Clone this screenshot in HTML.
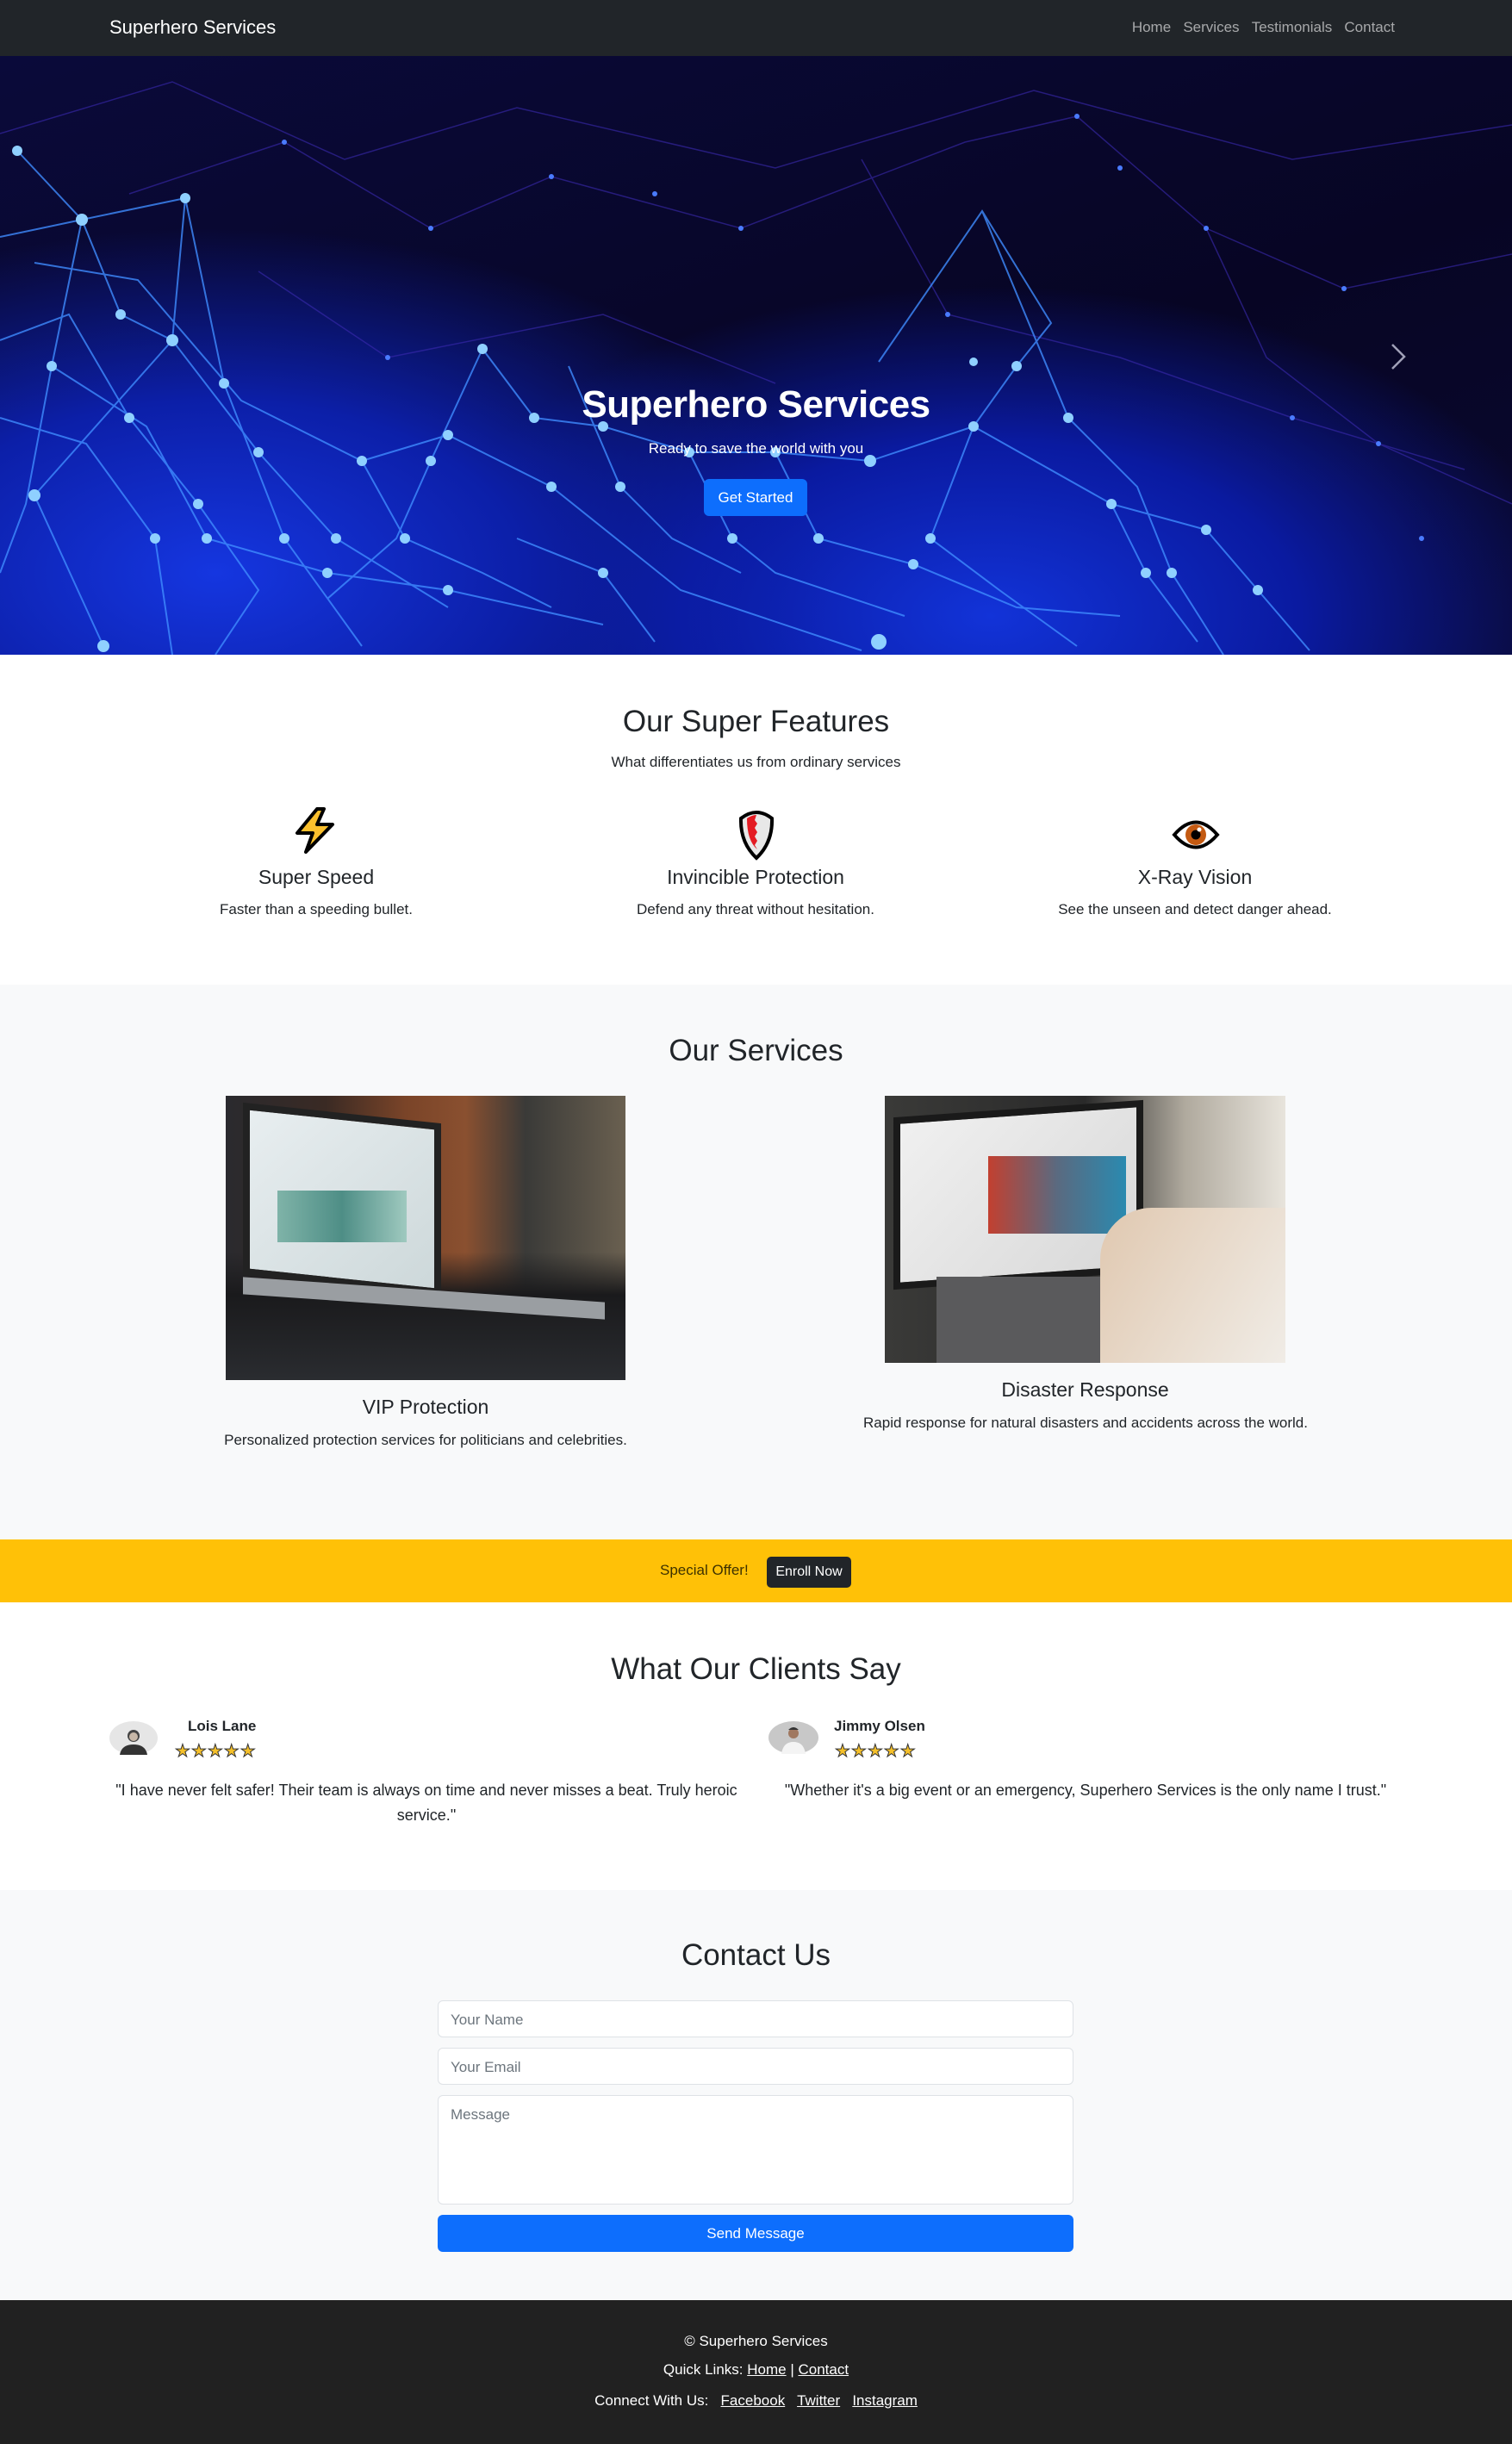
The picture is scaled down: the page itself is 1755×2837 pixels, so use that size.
<!DOCTYPE html>
<html><head><meta charset="utf-8">
<style>
*{margin:0;padding:0;box-sizing:border-box}
body{width:1755px;height:2837px;position:relative;font-family:"Liberation Sans",sans-serif;color:#212529;background:#fff;overflow:hidden}
.a{position:absolute}
.c{position:absolute;left:0;width:1755px;text-align:center}
nav{position:absolute;left:0;top:0;width:1755px;height:65px;background:#212529}
.hero{position:absolute;left:0;top:65px;width:1755px;height:695px;overflow:hidden;
background:radial-gradient(ellipse 900px 500px at 250px 600px,#1536e0 0%,#0c1fa8 40%,rgba(10,16,90,0) 80%),radial-gradient(ellipse 800px 450px at 1150px 650px,#1233d8 0%,#0a1aa0 45%,rgba(8,10,60,0) 85%),linear-gradient(160deg,#0a0a3a 0%,#070524 60%,#0a0930 100%)}
h2{font-weight:500}
.inp{position:absolute;left:508px;width:738px;background:#fff;border:1px solid #dee2e6;border-radius:6px;font-size:17px;color:#6c757d;padding:12px 14px}
footer{position:absolute;left:0;top:2670px;width:1755px;height:167px;background:#212121;color:#fff}
footer u{text-decoration:underline}
</style></head><body>
<nav>
<div class="a" style="left:127px;top:19px;color:#fff;font-size:22px">Superhero Services</div>
<div class="a" style="right:136px;top:22px;color:rgba(255,255,255,.6);font-size:17px">Home&nbsp;&nbsp;&nbsp;Services&nbsp;&nbsp;&nbsp;Testimonials&nbsp;&nbsp;&nbsp;Contact</div>
</nav>
<div class="hero">
<svg width="1755" height="695" style="position:absolute;left:0;top:0">
<g stroke="#3a2ab0" stroke-width="1.5" fill="none" opacity=".6">
<polyline points="150,160 330,100 500,200 640,140 860,200 1120,100 1250,70 1400,200 1560,270 1755,230"/>
<polyline points="0,90 200,30 400,120 600,60 900,130 1200,40 1500,120 1755,80"/>
<polyline points="1400,200 1470,350 1600,450 1755,520"/>
<polyline points="1000,120 1100,300 1300,350 1500,420 1700,480"/>
<polyline points="300,250 450,350 700,300 900,380"/>
</g>
<g stroke="#3f8cff" stroke-width="2" fill="none" opacity=".8">
<polyline points="20,110 95,190 215,165 200,330 40,510 120,685"/>
<polyline points="0,210 95,190 140,300 200,330 300,460 390,560 520,640"/>
<polyline points="40,240 160,260 280,400 420,470 520,440 640,500 790,620 1000,690"/>
<polyline points="95,190 60,360 30,520 0,600"/>
<polyline points="215,165 260,380 330,560 420,685"/>
<polyline points="0,330 80,300 150,420 230,520 300,620 250,695"/>
<polyline points="0,420 100,450 180,560 200,695"/>
<polyline points="60,360 170,430 240,560 380,600 520,620 700,660"/>
<polyline points="560,340 620,420 700,430 800,460 900,460 1010,470 1130,430 1180,360 1220,310 1140,180 1020,355"/>
<polyline points="1130,430 1080,560 1160,620 1250,685"/>
<polyline points="1130,430 1290,520 1400,550 1460,620 1520,690"/>
<polyline points="560,340 500,470 460,560 380,630"/>
<polyline points="800,460 850,560 900,600 1050,650"/>
<polyline points="1290,520 1330,600 1390,680"/>
<polyline points="660,360 720,500 780,560 860,600"/>
<polyline points="1140,180 1240,420 1320,500 1360,600 1420,695"/>
<polyline points="900,460 950,560 1060,590 1180,640 1300,650"/>
<polyline points="600,560 700,600 760,680"/>
<polyline points="420,470 470,560 560,600 640,640"/>
</g>
<g fill="#8fd0ff">
<circle cx="20" cy="110" r="6"/><circle cx="95" cy="190" r="7"/><circle cx="215" cy="165" r="6"/><circle cx="200" cy="330" r="7"/><circle cx="40" cy="510" r="7"/><circle cx="120" cy="685" r="7"/><circle cx="140" cy="300" r="6"/><circle cx="300" cy="460" r="6"/><circle cx="390" cy="560" r="6"/><circle cx="420" cy="470" r="6"/><circle cx="520" cy="440" r="6"/><circle cx="640" cy="500" r="6"/><circle cx="60" cy="360" r="6"/><circle cx="260" cy="380" r="6"/><circle cx="330" cy="560" r="6"/><circle cx="560" cy="340" r="6"/><circle cx="620" cy="420" r="6"/><circle cx="700" cy="430" r="6"/><circle cx="800" cy="460" r="6"/><circle cx="900" cy="460" r="6"/><circle cx="1010" cy="470" r="7"/><circle cx="1130" cy="430" r="6"/><circle cx="1180" cy="360" r="6"/><circle cx="1130" cy="355" r="5"/><circle cx="1080" cy="560" r="6"/><circle cx="1290" cy="520" r="6"/><circle cx="1400" cy="550" r="6"/><circle cx="1460" cy="620" r="6"/><circle cx="500" cy="470" r="6"/><circle cx="850" cy="560" r="6"/><circle cx="1020" cy="680" r="9"/><circle cx="720" cy="500" r="6"/><circle cx="1330" cy="600" r="6"/><circle cx="150" cy="420" r="6"/><circle cx="230" cy="520" r="6"/><circle cx="180" cy="560" r="6"/><circle cx="240" cy="560" r="6"/><circle cx="380" cy="600" r="6"/><circle cx="520" cy="620" r="6"/><circle cx="950" cy="560" r="6"/><circle cx="1060" cy="590" r="6"/><circle cx="1240" cy="420" r="6"/><circle cx="1360" cy="600" r="6"/><circle cx="470" cy="560" r="6"/><circle cx="700" cy="600" r="6"/>
</g>
<g fill="#4a7bff"><circle cx="330" cy="100" r="3"/><circle cx="640" cy="140" r="3"/><circle cx="860" cy="200" r="3"/><circle cx="1250" cy="70" r="3"/><circle cx="1400" cy="200" r="3"/><circle cx="1560" cy="270" r="3"/><circle cx="500" cy="200" r="3"/><circle cx="1300" cy="130" r="3"/><circle cx="760" cy="160" r="3"/><circle cx="1600" cy="450" r="3"/><circle cx="1650" cy="560" r="3"/><circle cx="1100" cy="300" r="3"/><circle cx="1500" cy="420" r="3"/><circle cx="450" cy="350" r="3"/></g>
</svg>
<svg class="a" style="left:1612px;top:333px" width="24" height="34"><polyline points="4,2 18,16 4,30" stroke="#a0a0b8" stroke-width="2.5" fill="none"/></svg>
<div class="c" style="top:380px;color:#fff;font-size:44px;font-weight:700;letter-spacing:-.5px">Superhero Services</div>
<div class="c" style="top:446px;color:#fff;font-size:17px">Ready to save the world with you</div>
<div class="a" style="left:817px;top:491px;width:120px;height:43px;background:#0d6efd;border-radius:6px;color:#fff;font-size:17px;text-align:center;line-height:43px">Get Started</div>
</div>

<h2 class="c" style="top:818px;font-size:35px">Our Super Features</h2>
<div class="c" style="top:875px;font-size:17px">What differentiates us from ordinary services</div>
<svg class="a" style="left:336px;top:935px" width="60" height="58" viewBox="0 0 60 58"><path d="M32,4 L9,32 L27,32 L19,54 L50,22 L32,22 L40,4 Z" fill="#fbc02d" stroke="#000" stroke-width="4" stroke-linejoin="round"/></svg>
<svg class="a" style="left:855px;top:938px" width="46" height="62" viewBox="0 0 46 62"><path d="M5,12 Q23,-2 41,12 Q42,40 23,58 Q4,40 5,12 Z" fill="#e8e8e8" stroke="#000" stroke-width="4"/><path d="M12,12 Q18,8 23,8 L21,14 L24,18 L21,23 L24,28 L21,33 L24,38 L21,43 L24,48 Q12,38 12,12 Z" fill="#e41b23"/></svg>
<svg class="a" style="left:1360px;top:946px" width="56" height="46" viewBox="0 0 56 46"><path d="M3,23 Q28,-6 53,23 Q28,52 3,23 Z" fill="#fff" stroke="#000" stroke-width="4"/><circle cx="28" cy="23" r="12" fill="#c45a12"/><circle cx="28" cy="23" r="5.5" fill="#000"/><circle cx="32" cy="17" r="2.5" fill="#fff"/></svg>
<div class="a" style="left:167px;width:400px;top:1005px;text-align:center;font-size:23px;font-weight:500">Super Speed</div>
<div class="a" style="left:167px;width:400px;top:1046px;text-align:center;font-size:17px">Faster than a speeding bullet.</div>
<div class="a" style="left:677px;width:400px;top:1005px;text-align:center;font-size:23px;font-weight:500">Invincible Protection</div>
<div class="a" style="left:677px;width:400px;top:1046px;text-align:center;font-size:17px">Defend any threat without hesitation.</div>
<div class="a" style="left:1187px;width:400px;top:1005px;text-align:center;font-size:23px;font-weight:500">X-Ray Vision</div>
<div class="a" style="left:1187px;width:400px;top:1046px;text-align:center;font-size:17px">See the unseen and detect danger ahead.</div>

<div class="a" style="left:0;top:1143px;width:1755px;height:644px;background:#f8f9fa"></div>
<h2 class="c" style="top:1200px;font-size:35px">Our Services</h2>
<div class="a" style="left:262px;top:1272px;width:464px;height:330px;overflow:hidden;background:linear-gradient(90deg,#2a2a2e 0%,#3a2a24 25%,#7a4428 45%,#8a5030 60%,#3a3a38 75%,#6a6050 100%)">
<div class="a" style="left:0;top:0;width:464px;height:330px;background:linear-gradient(180deg,rgba(0,0,0,0) 55%,#1a1a1c 70%,#2a2c30 100%)"></div>
<div class="a" style="left:20px;top:20px;width:230px;height:200px;background:linear-gradient(135deg,#e8eef0,#cdd8da);transform:skewY(6deg);border:8px solid #222"></div>
<div class="a" style="left:60px;top:110px;width:150px;height:60px;background:linear-gradient(90deg,#7fb3a8,#4e8e86,#9fc9bf)"></div>
<div class="a" style="left:20px;top:225px;width:420px;height:20px;background:#9a9ea2;transform:skewY(4deg)"></div>
</div>
<div class="a" style="left:1027px;top:1272px;width:465px;height:310px;overflow:hidden;background:linear-gradient(90deg,#3a3a38 0%,#2a2a2a 50%,#b0aa9e 75%,#e8e4dc 100%)">
<div class="a" style="left:10px;top:15px;width:290px;height:200px;background:linear-gradient(135deg,#f0f0f0,#d8d8d8);border:8px solid #1a1a1a;transform:skewY(-4deg)"></div>
<div class="a" style="left:120px;top:70px;width:160px;height:90px;background:linear-gradient(90deg,#c24030,#5a6a80,#2a8ab0)"></div>
<div class="a" style="left:60px;top:210px;width:260px;height:100px;background:#5a5a5c"></div>
<div class="a" style="left:250px;top:130px;width:215px;height:180px;background:linear-gradient(120deg,#e0c8b0,#f0ece6);border-radius:60px 0 0 0"></div>
</div>
<div class="a" style="left:262px;width:464px;top:1620px;text-align:center;font-size:23px;font-weight:500">VIP Protection</div>
<div class="a" style="left:182px;width:624px;top:1662px;text-align:center;font-size:17px">Personalized protection services for politicians and celebrities.</div>
<div class="a" style="left:1027px;width:465px;top:1600px;text-align:center;font-size:23px;font-weight:500">Disaster Response</div>
<div class="a" style="left:910px;width:700px;top:1642px;text-align:center;font-size:17px">Rapid response for natural disasters and accidents across the world.</div>

<div class="a" style="left:0;top:1787px;width:1755px;height:73px;background:#ffc107"></div>
<div class="a" style="left:766px;top:1813px;font-size:17px;color:#3d3100">Special Offer!</div>
<div class="a" style="left:890px;top:1807px;width:98px;height:36px;background:#212529;border-radius:5px;color:#fff;font-size:16px;text-align:center;line-height:36px">Enroll Now</div>

<h2 class="c" style="top:1918px;font-size:35px">What Our Clients Say</h2>
<svg class="a" style="left:127px;top:1998px" width="56" height="39" viewBox="0 0 56 39"><ellipse cx="28" cy="19.5" rx="28" ry="19.5" fill="#e6e6e6"/><circle cx="28" cy="17" r="7" fill="#444"/><circle cx="28" cy="18" r="5" fill="#c8b8a8"/><path d="M12,39 Q14,27 28,27 Q42,27 44,39 Z" fill="#333"/></svg>
<div class="a" style="left:218px;top:1994px;font-size:17px;font-weight:700">Lois Lane</div>
<div class="a" style="left:203px;top:2020px;font-size:20px;color:#f5c02a;letter-spacing:1px;-webkit-text-stroke:1px #333">★★★★★</div>
<svg class="a" style="left:892px;top:1998px" width="58" height="38" viewBox="0 0 58 38"><ellipse cx="29" cy="19" rx="29" ry="19" fill="#c8c8c8"/><circle cx="29" cy="14" r="6" fill="#a07860"/><path d="M23,10 Q29,4 35,10" fill="#333"/><path d="M15,38 Q17,24 29,24 Q41,24 43,38 Z" fill="#f4f4f4"/></svg>
<div class="a" style="left:968px;top:1994px;font-size:17px;font-weight:700">Jimmy Olsen</div>
<div class="a" style="left:969px;top:2020px;font-size:20px;color:#f5c02a;letter-spacing:1px;-webkit-text-stroke:1px #333">★★★★★</div>
<div class="a" style="left:130px;width:730px;top:2064px;text-align:center;font-size:18px;line-height:29px">"I have never felt safer! Their team is always on time and never misses a beat. Truly heroic service."</div>
<div class="a" style="left:880px;width:760px;top:2064px;text-align:center;font-size:18px;line-height:29px">"Whether it's a big event or an emergency, Superhero Services is the only name I trust."</div>

<div class="a" style="left:0;top:2194px;width:1755px;height:476px;background:#f8f9fa"></div>
<h2 class="c" style="top:2250px;font-size:35px">Contact Us</h2>
<div class="inp" style="top:2322px;height:43px">Your Name</div>
<div class="inp" style="top:2377px;height:43px">Your Email</div>
<div class="inp" style="top:2432px;height:127px">Message</div>
<div class="a" style="left:508px;top:2571px;width:738px;height:43px;background:#0d6efd;border-radius:6px;color:#fff;font-size:17px;text-align:center;line-height:43px">Send Message</div>

<footer>
<div class="c" style="top:38px;font-size:17px">© Superhero Services</div>
<div class="c" style="top:71px;font-size:17px">Quick Links: <u>Home</u> | <u>Contact</u></div>
<div class="c" style="top:107px;font-size:17px">Connect With Us:&nbsp;&nbsp; <u>Facebook</u>&nbsp;&nbsp; <u>Twitter</u>&nbsp;&nbsp; <u>Instagram</u></div>
</footer>
</body></html>
